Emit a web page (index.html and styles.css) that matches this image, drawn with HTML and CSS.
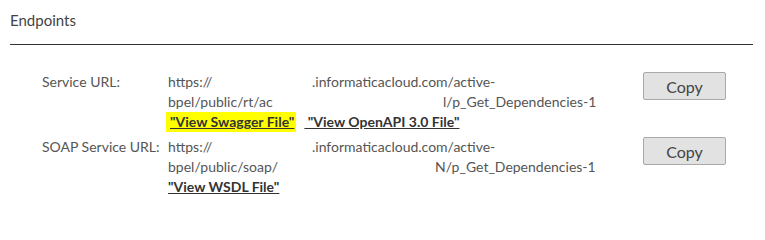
FILE: index.html
```html
<!DOCTYPE html>
<html>
<head>
<meta charset="utf-8">
<link rel="stylesheet" href="styles.css">
</head>
<body>
<section class="panel">
  <h2 class="panel-title">Endpoints</h2>
  <div class="rows">
    <div class="row">
      <div class="label">Service URL:</div>
      <div class="value">
        <div class="line"><span class="seg seg-a">https://</span><span>.informaticacloud.com/active-</span></div>
        <div class="line"><span class="seg seg-b">bpel/public/rt/ac</span><span>l/p_Get_Dependencies-1</span></div>
        <div class="line links"><a class="link hl" href="#">"View Swagger File"</a><a class="link" href="#"> "View OpenAPI 3.0 File"</a></div>
      </div>
      <div class="action"><button class="btn">Copy</button></div>
    </div>
    <div class="row">
      <div class="label">SOAP Service URL:</div>
      <div class="value">
        <div class="line"><span class="seg seg-a">https://</span><span>.informaticacloud.com/active-</span></div>
        <div class="line"><span class="seg seg-c">bpel/public/soap/</span><span>N/p_Get_Dependencies-1</span></div>
        <div class="line links"><a class="link" href="#">"View WSDL File"</a></div>
      </div>
      <div class="action"><button class="btn">Copy</button></div>
    </div>
  </div>
</section>
</body>
</html>
```
FILE: styles.css
```css
html, body {
  margin: 0;
  padding: 0;
  background: #ffffff;
}
body {
  font-family: Lato, "Open Sans", "Liberation Sans", sans-serif;
  color: #555555;
}
.panel {
  padding: 10px 12px 0 10px;
}
.panel-title {
  margin: 0;
  font-size: 15px;
  font-weight: 400;
  line-height: 20px;
  color: #444444;
  padding-bottom: 14px;
  border-bottom: 1px solid #333333;
}
.rows {
  display: flex;
  flex-direction: column;
  gap: 5px;
  padding-top: 27px;
}
.row {
  display: grid;
  grid-template-columns: 158px 475px 83px;
  column-gap: 0;
}
.label {
  padding-left: 32px;
  font-size: 14px;
  line-height: 20px;
}
.value {
  font-size: 14px;
  line-height: 20px;
  white-space: nowrap;
}
.line {
  display: flex;
}
.seg {
  display: inline-block;
}
.seg-a { width: 144px; }
.seg-b { width: 275px; }
.seg-c { width: 267px; }
.links {
  gap: 0;
}
.link {
  color: #333333;
  font-weight: 700;
  text-decoration: underline;
  white-space: pre;
}
.hl {
  background: #ffff00;
  margin-left: -2px;
  padding: 0 2px 0 4px;
  margin-right: 8px;
}
.action {
  display: flex;
  justify-content: flex-start;
}
.btn {
  width: 83px;
  height: 28px;
  background: #e2e2e2;
  border: 1px solid #a9a9a9;
  border-radius: 2px;
  font-family: Lato, "Open Sans", sans-serif;
  font-size: 16px;
  color: #444444;
  padding: 0;
}
```
